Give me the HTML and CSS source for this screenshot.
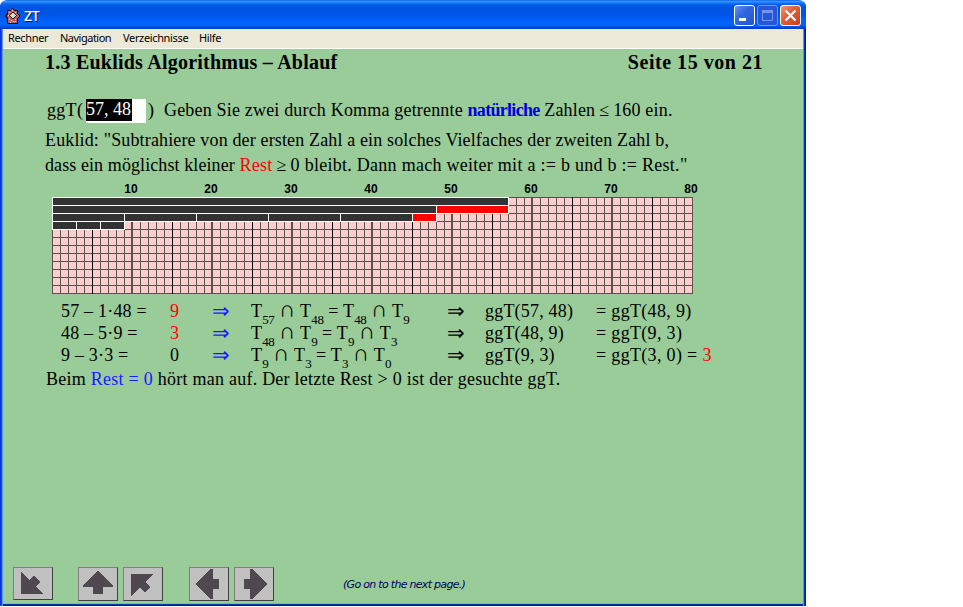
FILE: index.html
```html
<!DOCTYPE html>
<html lang="de">
<head>
<meta charset="utf-8">
<title>ZT</title>
<link rel="stylesheet" href="styles.css">
</head>
<body>
<div class="window">
  <header class="titlebar">
    <svg class="app-icon" width="15" height="16" viewBox="0 0 15 16" shape-rendering="crispEdges">
      <path d="M7.500 0l2.500 2h3v3l2 3-2 2.500v5h-11v-5l-2-2.500 2-3v-3h3z" fill="#241012"/>
      <path d="M7.500 1l2 2h2.500v3l2 2-2 2v5h-9v-5l-2-2 2-2v-3h2.500z" fill="#b9615e"/>
      <path d="M4 4h1v1h-1zM10 4h1v1h-1zM3 7h1v1h-1zM11 7h1v1h-1zM4 11h1v1h-1zM10 11h1v1h-1zM6 12h1v1h-1zM8 13h1v1h-1zM5 14h1v1h-1zM10 13h1v1h-1zM7 2h1v1h-1z" fill="#f6c4bc"/>
      <path d="M7.500 3.500l4 4-4 4-4-4z" fill="#29201e"/>
      <path d="M7.500 4.500l3 3-3 3-3-3z" fill="#d5ddd0"/>
    </svg>
    <span class="app-name">ZT</span>
    <div class="controls">
      <svg class="control" width="21" height="21" viewBox="0 0 21 21"><rect x=".5" y=".5" width="20" height="20" rx="2.500" fill="url(#blue)" stroke="#fff"/><path d="M5 13h7v3H5z" fill="#fff"/></svg>
      <svg class="control" width="21" height="21" viewBox="0 0 21 21"><rect x=".5" y=".5" width="20" height="20" rx="2.500" fill="#2458d8" stroke="#6f99ee"/><path d="M5.500 6v9.500h10V6" fill="none" stroke="#7895ec"/><path d="M5 5h11v3H5z" fill="#7895ec"/></svg>
      <svg class="control" width="21" height="21" viewBox="0 0 21 21">
        <defs>
          <linearGradient id="blue" x2="1" y2="1"><stop stop-color="#6f96f0"/><stop offset=".4" stop-color="#3267df"/><stop offset="1" stop-color="#2454d0"/></linearGradient>
          <linearGradient id="red" x2="1" y2="1"><stop stop-color="#ef9d84"/><stop offset=".4" stop-color="#e35f3c"/><stop offset="1" stop-color="#c93d18"/></linearGradient>
        </defs>
        <rect x=".5" y=".5" width="20" height="20" rx="2.500" fill="url(#red)" stroke="#fff"/><path d="M5.500 5.500l10 10M15.500 5.500l-10 10" stroke="#fff" stroke-width="2.200"/>
      </svg>
    </div>
  </header>
  <nav class="menu"><span class="m1">Rechner</span><span class="m2">Navigation</span><span class="m3">Verzeichnisse</span><span class="m4">Hilfe</span></nav>
  <main class="page">
    <div class="heading"><h1>1.3 Euklids Algorithmus – Ablauf</h1><span class="page-no">Seite 15 von 21</span></div>
    <div class="prompt"><span class="call">ggT(</span><span class="field"><span class="selected">57, 48</span></span><span>)</span><span class="hint">Geben Sie zwei durch Komma getrennte <b>natürliche</b> Zahlen <span class="rel">≤</span> 160 ein.</span></div>
    <p class="rule">Euklid: "Subtrahiere von der ersten Zahl a ein solches Vielfaches der zweiten Zahl b,</p>
    <p class="rule second"><span class="lead">dass ein möglichst kleiner </span><span class="red">Rest</span> <span class="rel">≥</span> 0 bleibt. Dann mach weiter mit a := b und b := Rest."</p>
    <div class="scale"><span>10</span><span>20</span><span>30</span><span>40</span><span>50</span><span>60</span><span>70</span><span>80</span></div>
    <svg class="chart" width="641" height="97" viewBox="0 0 641 97" shape-rendering="crispEdges">
      <defs>
        <pattern id="cell" width="8" height="8" patternUnits="userSpaceOnUse"><path d="M0 0h8v1H1v7H0z" fill="#5c5050"/></pattern>
        <pattern id="tens" width="80" height="97" patternUnits="userSpaceOnUse"><path d="M40 0h1v97h-1z" fill="#000"/><path d="M79 0h1v97h-1z" fill="#5c5050"/></pattern>
      </defs>
      <rect width="641" height="97" fill="#fcc"/>
      <rect width="641" height="97" fill="url(#cell)"/>
      <rect width="639" height="97" fill="url(#tens)"/>
      <path d="M640 0h1v97h-1z" fill="#5c5050"/>
      <g fill="#333" stroke="#fff">
        <rect x=".5" y=".5" width="456" height="8"/>
        <rect x=".5" y="8.500" width="384" height="8"/><rect x="384.500" y="8.500" width="72" height="8" fill="red"/>
        <rect x=".5" y="16.500" width="72" height="8"/><rect x="72.500" y="16.500" width="72" height="8"/><rect x="144.500" y="16.500" width="72" height="8"/><rect x="216.500" y="16.500" width="72" height="8"/><rect x="288.500" y="16.500" width="72" height="8"/><rect x="360.500" y="16.500" width="24" height="8" fill="red"/>
        <rect x=".5" y="24.500" width="24" height="8"/><rect x="24.500" y="24.500" width="24" height="8"/><rect x="48.500" y="24.500" width="24" height="8"/>
      </g>
    </svg>
    <div class="steps">
      <span>57 – 1·48 =</span><span class="red">9</span><span class="arrow blue">⇒</span><span class="sets">T<sub>57</sub> <i>∩</i> T<sub>48</sub> = T<sub>48</sub> <i>∩</i> T<sub>9</sub></span><span class="arrow">⇒</span><span>ggT(57, 48)</span><span class="result">= ggT(48, 9)</span>
      <span>48 – 5·9 =</span><span class="red">3</span><span class="arrow blue">⇒</span><span class="sets">T<sub>48</sub> <i>∩</i> T<sub>9</sub> = T<sub>9</sub> <i>∩</i> T<sub>3</sub></span><span class="arrow">⇒</span><span>ggT(48, 9)</span><span class="result">= ggT(9, 3)</span>
      <span>9 – 3·3 =</span><span>0</span><span class="arrow blue">⇒</span><span class="sets">T<sub>9</sub> <i>∩</i> T<sub>3</sub> = T<sub>3</sub> <i>∩</i> T<sub>0</sub></span><span class="arrow">⇒</span><span>ggT(9, 3)</span><span class="result">= ggT(3, 0) = <span class="red">3</span></span>
    </div>
    <p class="closing">Beim <span class="blue">Rest = 0</span> hört man auf. Der letzte Rest &gt; 0 ist der gesuchte ggT.</p>
    <footer class="toolbar">
      <svg class="button" width="40" height="33" viewBox="0 0 40 33"><path d="M7 4l9 9 5-5 7 7-5 5 8 8H7z"/></svg>
      <svg class="button b2" width="40" height="34" viewBox="0 0 40 34"><path d="M20 3l16 16v1H25v8H15v-8H4v-1z"/></svg>
      <svg class="button b3" width="40" height="34" viewBox="0 0 40 34"><path d="M7 6h24v1l-8 8 5 5-6 6-5-5-9 9H7z"/></svg>
      <svg class="button b4" width="40" height="34" viewBox="0 0 40 34"><path d="M6 17L22 1h2v11h7v10h-7v11h-2z"/></svg>
      <svg class="button b5" width="40" height="34" viewBox="0 0 40 34"><path d="M34 17L18 1h-2v11H9v10h7v11h2z"/></svg>
      <span class="status">(Go on to the next page.)</span>
    </footer>
  </main>
</div>
</body>
</html>
```
FILE: styles.css
```css
* { box-sizing: border-box; }
body { margin: 0; background: #fff; }
.window {
  width: 806px; height: 606px;
  display: flex; flex-direction: column;
  background: linear-gradient(90deg, #0831d9 0 1px, #0855dd 1px 2px, #5295e0 2px 3px, transparent 3px 803px, #5295e0 803px 804px, #003ab8 804px 805px, #00138c 805px);
  border-radius: 7px 7px 0 0;
  overflow: hidden;
}
.titlebar {
  height: 29px; flex: none; display: flex; align-items: center; padding: 2px 5px 0 5px;
  background: linear-gradient(180deg, #0058d8 0, #3c91ff 1px, #288eff 2px, #0664ee 4px, #0054e3 7px, #0054e3 13px, #005bf5 19px, #0266fc 24px, #005cf2 26px, #0144cf 28px, #0138b4 29px);
}
.app-name { margin-left: 4px; color: #fff; font: 500 14px/16px "Noto Sans", sans-serif; text-shadow: 1px 1px #0a1883; letter-spacing: -0.3px; }
.controls { margin-left: auto; display: flex; gap: 2px; }
.control { display: block; }
.menu {
  height: 20px; flex: none; margin: 0 3px; background: #ece9d8; border-bottom: 1px solid #fff;
  display: flex; padding-left: 5px; font: 11px/18px "Noto Sans", sans-serif; letter-spacing: -0.35px; color: #000; white-space: nowrap;
}
.m1 { width: 52px; }
.m2 { width: 63px; letter-spacing: -0.5px; }
.m3 { width: 76px; }
.page {
  flex: 1; margin: 0 3px; background: #9c9; display: flex; flex-direction: column;
  font: 18px/24px "Liberation Serif", serif; color: #000; white-space: nowrap;
  box-shadow: inset 0 -1px #00138c, inset 0 -2px #003ab8, inset 0 -3px #70b5e0;
}
.heading { display: flex; justify-content: space-between; margin: 1px 40px 0 42px; height: 24px; font-weight: bold; font-size: 20px; letter-spacing: 0.23px; }
.page-no { letter-spacing: 0.53px; }
h1 { margin: 0; font: inherit; }
.prompt { display: flex; margin: 24px 0 0 44px; height: 26px; line-height: 24px; }
.call { width: 37px; letter-spacing: 0.3px; }
.field { width: 60px; height: 24px; margin: 1px 2px 0 2px; background: #fff; }
.selected { display: block; width: 46px; height: 22px; line-height: 20px; background: #000; color: #fff; }
.hint { margin-left: 10px; letter-spacing: 0.18px; }
.hint b { color: #0000e0; letter-spacing: -0.7px; }
.rel { margin: 0 -0.8px; }
.blue { color: #1a1aff; }
.red { color: #f00; }
.rule { margin: 4px 0 0 42px; height: 24px; letter-spacing: 0.145px; }
.second { margin-top: 1px; letter-spacing: 0.27px; }
.lead { letter-spacing: 0.09px; }
.scale { display: flex; margin: 5px 0 0 88px; font: bold 12px/14px "Liberation Sans", sans-serif; }
.scale span { width: 80px; text-align: center; }
.chart { display: block; margin: 1px 0 0 49px; flex: none; }
.steps { display: grid; grid-template-columns: 109px 42px 39px 196px 38px 111px auto; grid-auto-rows: 22px; margin: 6px 0 0 58px; line-height: 22px; letter-spacing: 0.2px; }
.steps i { font-style: normal; font-size: 23px; line-height: 0; letter-spacing: 0; }
.sets { word-spacing: 0; }
.arrow { font-size: 21px; line-height: 23px; }
.result { letter-spacing: 0.33px; }
sub { font-size: 13px; line-height: 0; vertical-align: -7px; letter-spacing: -0.4px; }
.closing { margin: 1px 0 0 43px; letter-spacing: 0.25px; }
.toolbar { display: flex; margin: auto 0 5px 10px; height: 34px; }
.button { display: block; flex: none; background: #c0c0c0; border: 1px solid; border-color: #808080 #404040 #404040 #808080; fill: #50484f; shape-rendering: crispEdges; }
.b2 { margin-left: 25px; }
.b3 { margin-left: 5px; }
.b4 { margin-left: 26px; }
.b5 { margin-left: 5px; }
.status { margin-left: 69px; font: italic 11px/36px "DejaVu Sans", sans-serif; letter-spacing: -0.7px; color: #000060; }
```
